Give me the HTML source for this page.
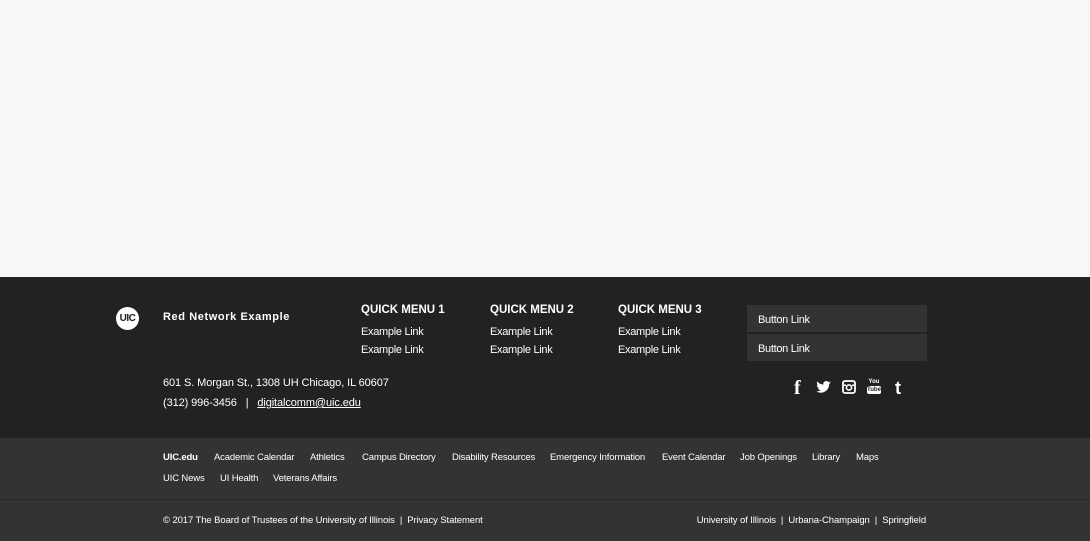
<!DOCTYPE html>
<html><head><style>
*{margin:0;padding:0;box-sizing:border-box}
body{width:1090px;height:541px;background:#f7f7f7;font-family:"Liberation Sans",sans-serif;position:relative;overflow:hidden;color:#fff}
.a{position:absolute;white-space:nowrap;line-height:1}
.ft{position:absolute;left:0;top:277px;width:1090px;height:161px;background:#222}
.lk{position:absolute;left:0;top:438px;width:1090px;height:61px;background:#333}
.bt{position:absolute;left:0;top:499px;width:1090px;height:42px;background:#333;border-top:1px solid #2a2a2a}
.h{font-weight:bold;font-size:11.5px;letter-spacing:0}
.l{font-size:11px;letter-spacing:-.3px}
.s{font-size:9.5px;letter-spacing:-.15px}
.btn{position:absolute;left:747px;width:180px;height:27px;background:#333;font-size:11px;letter-spacing:-.3px;padding:9px 0 0 11px}
</style></head><body>
<div class="ft"></div><div class="lk"></div><div class="bt"></div>
<div class="a" style="left:116px;top:307px;width:23px;height:23px;border-radius:50%;background:#fff;color:#222;font-weight:bold;font-size:10px;letter-spacing:-.5px;text-align:center;line-height:23px">UIC</div>
<div class="a" style="left:163px;top:312px;font-weight:bold;font-size:11px;letter-spacing:.6px">Red Network Example</div>
<div class="a h" style="left:361px;top:305px">QUICK MENU 1</div>
<div class="a h" style="left:490px;top:305px">QUICK MENU 2</div>
<div class="a h" style="left:618px;top:305px">QUICK MENU 3</div>
<div class="a l" style="left:361px;top:327px">Example Link</div>
<div class="a l" style="left:361px;top:345px">Example Link</div>
<div class="a l" style="left:490px;top:327px">Example Link</div>
<div class="a l" style="left:490px;top:345px">Example Link</div>
<div class="a l" style="left:618px;top:327px">Example Link</div>
<div class="a l" style="left:618px;top:345px">Example Link</div>
<div class="btn" style="top:305px">Button Link</div>
<div class="btn" style="top:334px">Button Link</div>
<div class="a l" style="left:163px;top:378px;letter-spacing:-.1px">601 S. Morgan St., 1308 UH Chicago, IL 60607</div>
<div class="a l" style="left:163px;top:398px;letter-spacing:-.1px">(312) 996-3456 &nbsp;&nbsp;| &nbsp;&nbsp;<span style="text-decoration:underline">digitalcomm@uic.edu</span></div>
<div class="a" style="left:794px;top:378px;font-weight:bold;font-size:20px;font-family:'Liberation Serif',serif">f</div>
<svg class="a" style="left:816px;top:381px" width="15" height="12" viewBox="0 0 24 20"><path fill="#fff" d="M24 2.4a10 10 0 0 1-2.8.8A5 5 0 0 0 23.3.5a10 10 0 0 1-3.1 1.2A4.9 4.9 0 0 0 11.8 6 14 14 0 0 1 1.7.9a4.9 4.9 0 0 0 1.5 6.6A5 5 0 0 1 1 6.9a4.9 4.9 0 0 0 3.9 4.9 5 5 0 0 1-2.2.1 4.9 4.9 0 0 0 4.6 3.4A9.9 9.9 0 0 1 0 17.3 14 14 0 0 0 7.5 19.5c9.1 0 14-7.5 14-14v-.6A10 10 0 0 0 24 2.4z"/></svg>
<svg class="a" style="left:842px;top:380px" width="14" height="14" viewBox="0 0 14 14"><rect x="1" y="1" width="12" height="12" rx="2" fill="none" stroke="#fff" stroke-width="1.8"/><circle cx="7" cy="7.5" r="2.6" fill="none" stroke="#fff" stroke-width="1.6"/><rect x="1" y="4.5" width="3" height="1.5" fill="#fff"/><rect x="10" y="4.5" width="3" height="1.5" fill="#fff"/></svg>
<div class="a" style="left:867px;top:379px;font-size:6px;font-weight:bold;width:14px;text-align:center">You</div>
<div class="a" style="left:867px;top:386px;width:14px;height:8px;background:#fff;border-radius:2px;color:#222;font-size:6px;font-weight:bold;text-align:center;line-height:8px">Tube</div>
<div class="a" style="left:895px;top:379px;font-weight:bold;font-size:18px">t</div>
<div class="a s" style="left:163px;top:453px"><b>UIC.edu</b></div>
<div class="a s" style="left:214px;top:453px">Academic Calendar</div>
<div class="a s" style="left:310px;top:453px">Athletics</div>
<div class="a s" style="left:362px;top:453px">Campus Directory</div>
<div class="a s" style="left:452px;top:453px">Disability Resources</div>
<div class="a s" style="left:550px;top:453px">Emergency Information</div>
<div class="a s" style="left:662px;top:453px">Event Calendar</div>
<div class="a s" style="left:740px;top:453px">Job Openings</div>
<div class="a s" style="left:812px;top:453px">Library</div>
<div class="a s" style="left:856px;top:453px">Maps</div>
<div class="a s" style="left:163px;top:474px">UIC News</div>
<div class="a s" style="left:220px;top:474px">UI Health</div>
<div class="a s" style="left:273px;top:474px">Veterans Affairs</div>
<div class="a s" style="left:163px;top:516px;letter-spacing:-.1px">© 2017 The Board of Trustees of the University of Illinois &nbsp;| &nbsp;Privacy Statement</div>
<div class="a s" style="right:164px;top:516px;letter-spacing:-.1px">University of Illinois &nbsp;| &nbsp;Urbana-Champaign &nbsp;| &nbsp;Springfield</div>
</body></html>
